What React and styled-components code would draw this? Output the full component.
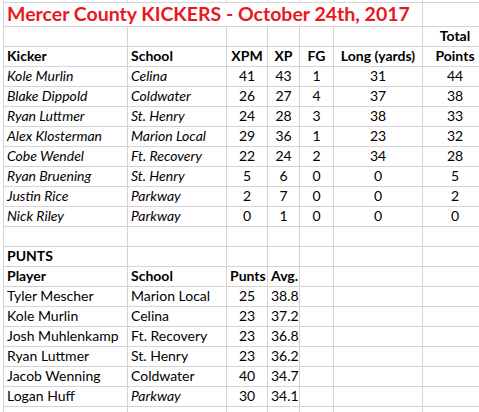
import React from "react";
import styled, { createGlobalStyle } from "styled-components";

const GlobalStyle = createGlobalStyle`
  html, body {
    margin: 0;
    padding: 0;
    background: #ffffff;
  }
`;

const Sheet = styled.div`
  width: 479px;
  height: 412px;
  overflow: hidden;
  background: #ffffff;
  font-family: Lato, "Liberation Sans", sans-serif;
  color: #000000;
`;

const Grid = styled.table`
  border-collapse: collapse;
  table-layout: fixed;
  width: 484px;
  margin: -18px 0 0 3px;

  td {
    border: 1px solid #d4d4d4;
    padding: 0 3px 2px;
    height: 19px;
    box-sizing: border-box;
    vertical-align: bottom;
    white-space: nowrap;
    overflow: hidden;
    font-size: 14px;
    line-height: 17px;
  }
`;

const Row = styled.tr`
  td {
    height: ${(p) => (p.$tall ? "24px" : "20px")};
  }
`;

const Cell = styled.td`
  text-align: ${(p) => (p.$center ? "center" : "left")};
  font-weight: ${(p) => (p.$bold ? 700 : 400)};
  font-style: ${(p) => (p.$italic ? "italic" : "normal")};
`;

const Title = styled.td`
  && {
    color: #e8191e;
    font-weight: 700;
    font-size: 19.5px;
    line-height: 22px;
    padding-bottom: 1px;
  }
`;

const widths = [124, 99, 41, 32, 34, 89, 65];

const kickers = [
  ["Kole Murlin", "Celina", 41, 43, 1, 31, 44],
  ["Blake Dippold", "Coldwater", 26, 27, 4, 37, 38],
  ["Ryan Luttmer", "St. Henry", 24, 28, 3, 38, 33],
  ["Alex Klosterman", "Marion Local", 29, 36, 1, 23, 32],
  ["Cobe Wendel", "Ft. Recovery", 22, 24, 2, 34, 28],
  ["Ryan Bruening", "St. Henry", 5, 6, 0, 0, 5],
  ["Justin Rice", "Parkway", 2, 7, 0, 0, 2],
  ["Nick Riley", "Parkway", 0, 1, 0, 0, 0],
];

const punters = [
  ["Tyler Mescher", "Marion Local", 25, "38.8"],
  ["Kole Murlin", "Celina", 23, "37.2"],
  ["Josh Muhlenkamp", "Ft. Recovery", 23, "36.8"],
  ["Ryan Luttmer", "St. Henry", 23, "36.2"],
  ["Jacob Wenning", "Coldwater", 40, "34.7"],
  ["Logan Huff", "Parkway", 30, "34.1", true],
];

function Blank({ count }) {
  return Array.from({ length: count }, (_, i) => <Cell key={i} />);
}

export default function App() {
  return (
    <Sheet>
      <GlobalStyle />
      <Grid>
        <colgroup>
          {widths.map((w, i) => (
            <col key={i} style={{ width: w }} />
          ))}
        </colgroup>
        <tbody>
          <Row>
            <Blank count={7} />
          </Row>
          <Row $tall>
            <Title colSpan={6}>Mercer County KICKERS - October 24th, 2017</Title>
            <Cell />
          </Row>
          <Row>
            <Blank count={6} />
            <Cell $bold $center>Total</Cell>
          </Row>
          <Row>
            <Cell $bold>Kicker</Cell>
            <Cell $bold>School</Cell>
            <Cell $bold $center>XPM</Cell>
            <Cell $bold $center>XP</Cell>
            <Cell $bold $center>FG</Cell>
            <Cell $bold $center>Long (yards)</Cell>
            <Cell $bold $center>Points</Cell>
          </Row>
          {kickers.map((k) => (
            <Row key={k[0]}>
              <Cell $italic>{k[0]}</Cell>
              <Cell $italic>{k[1]}</Cell>
              {k.slice(2).map((v, i) => (
                <Cell key={i} $center>{v}</Cell>
              ))}
            </Row>
          ))}
          <Row>
            <Blank count={7} />
          </Row>
          <Row>
            <Cell $bold>PUNTS</Cell>
            <Blank count={6} />
          </Row>
          <Row>
            <Cell $bold>Player</Cell>
            <Cell $bold>School</Cell>
            <Cell $bold>Punts</Cell>
            <Cell $bold>Avg.</Cell>
            <Blank count={3} />
          </Row>
          {punters.map((p) => (
            <Row key={p[0]}>
              <Cell>{p[0]}</Cell>
              <Cell $italic={p[4]}>{p[1]}</Cell>
              <Cell $center>{p[2]}</Cell>
              <Cell $center>{p[3]}</Cell>
              <Blank count={3} />
            </Row>
          ))}
          <Row>
            <Blank count={7} />
          </Row>
        </tbody>
      </Grid>
    </Sheet>
  );
}
